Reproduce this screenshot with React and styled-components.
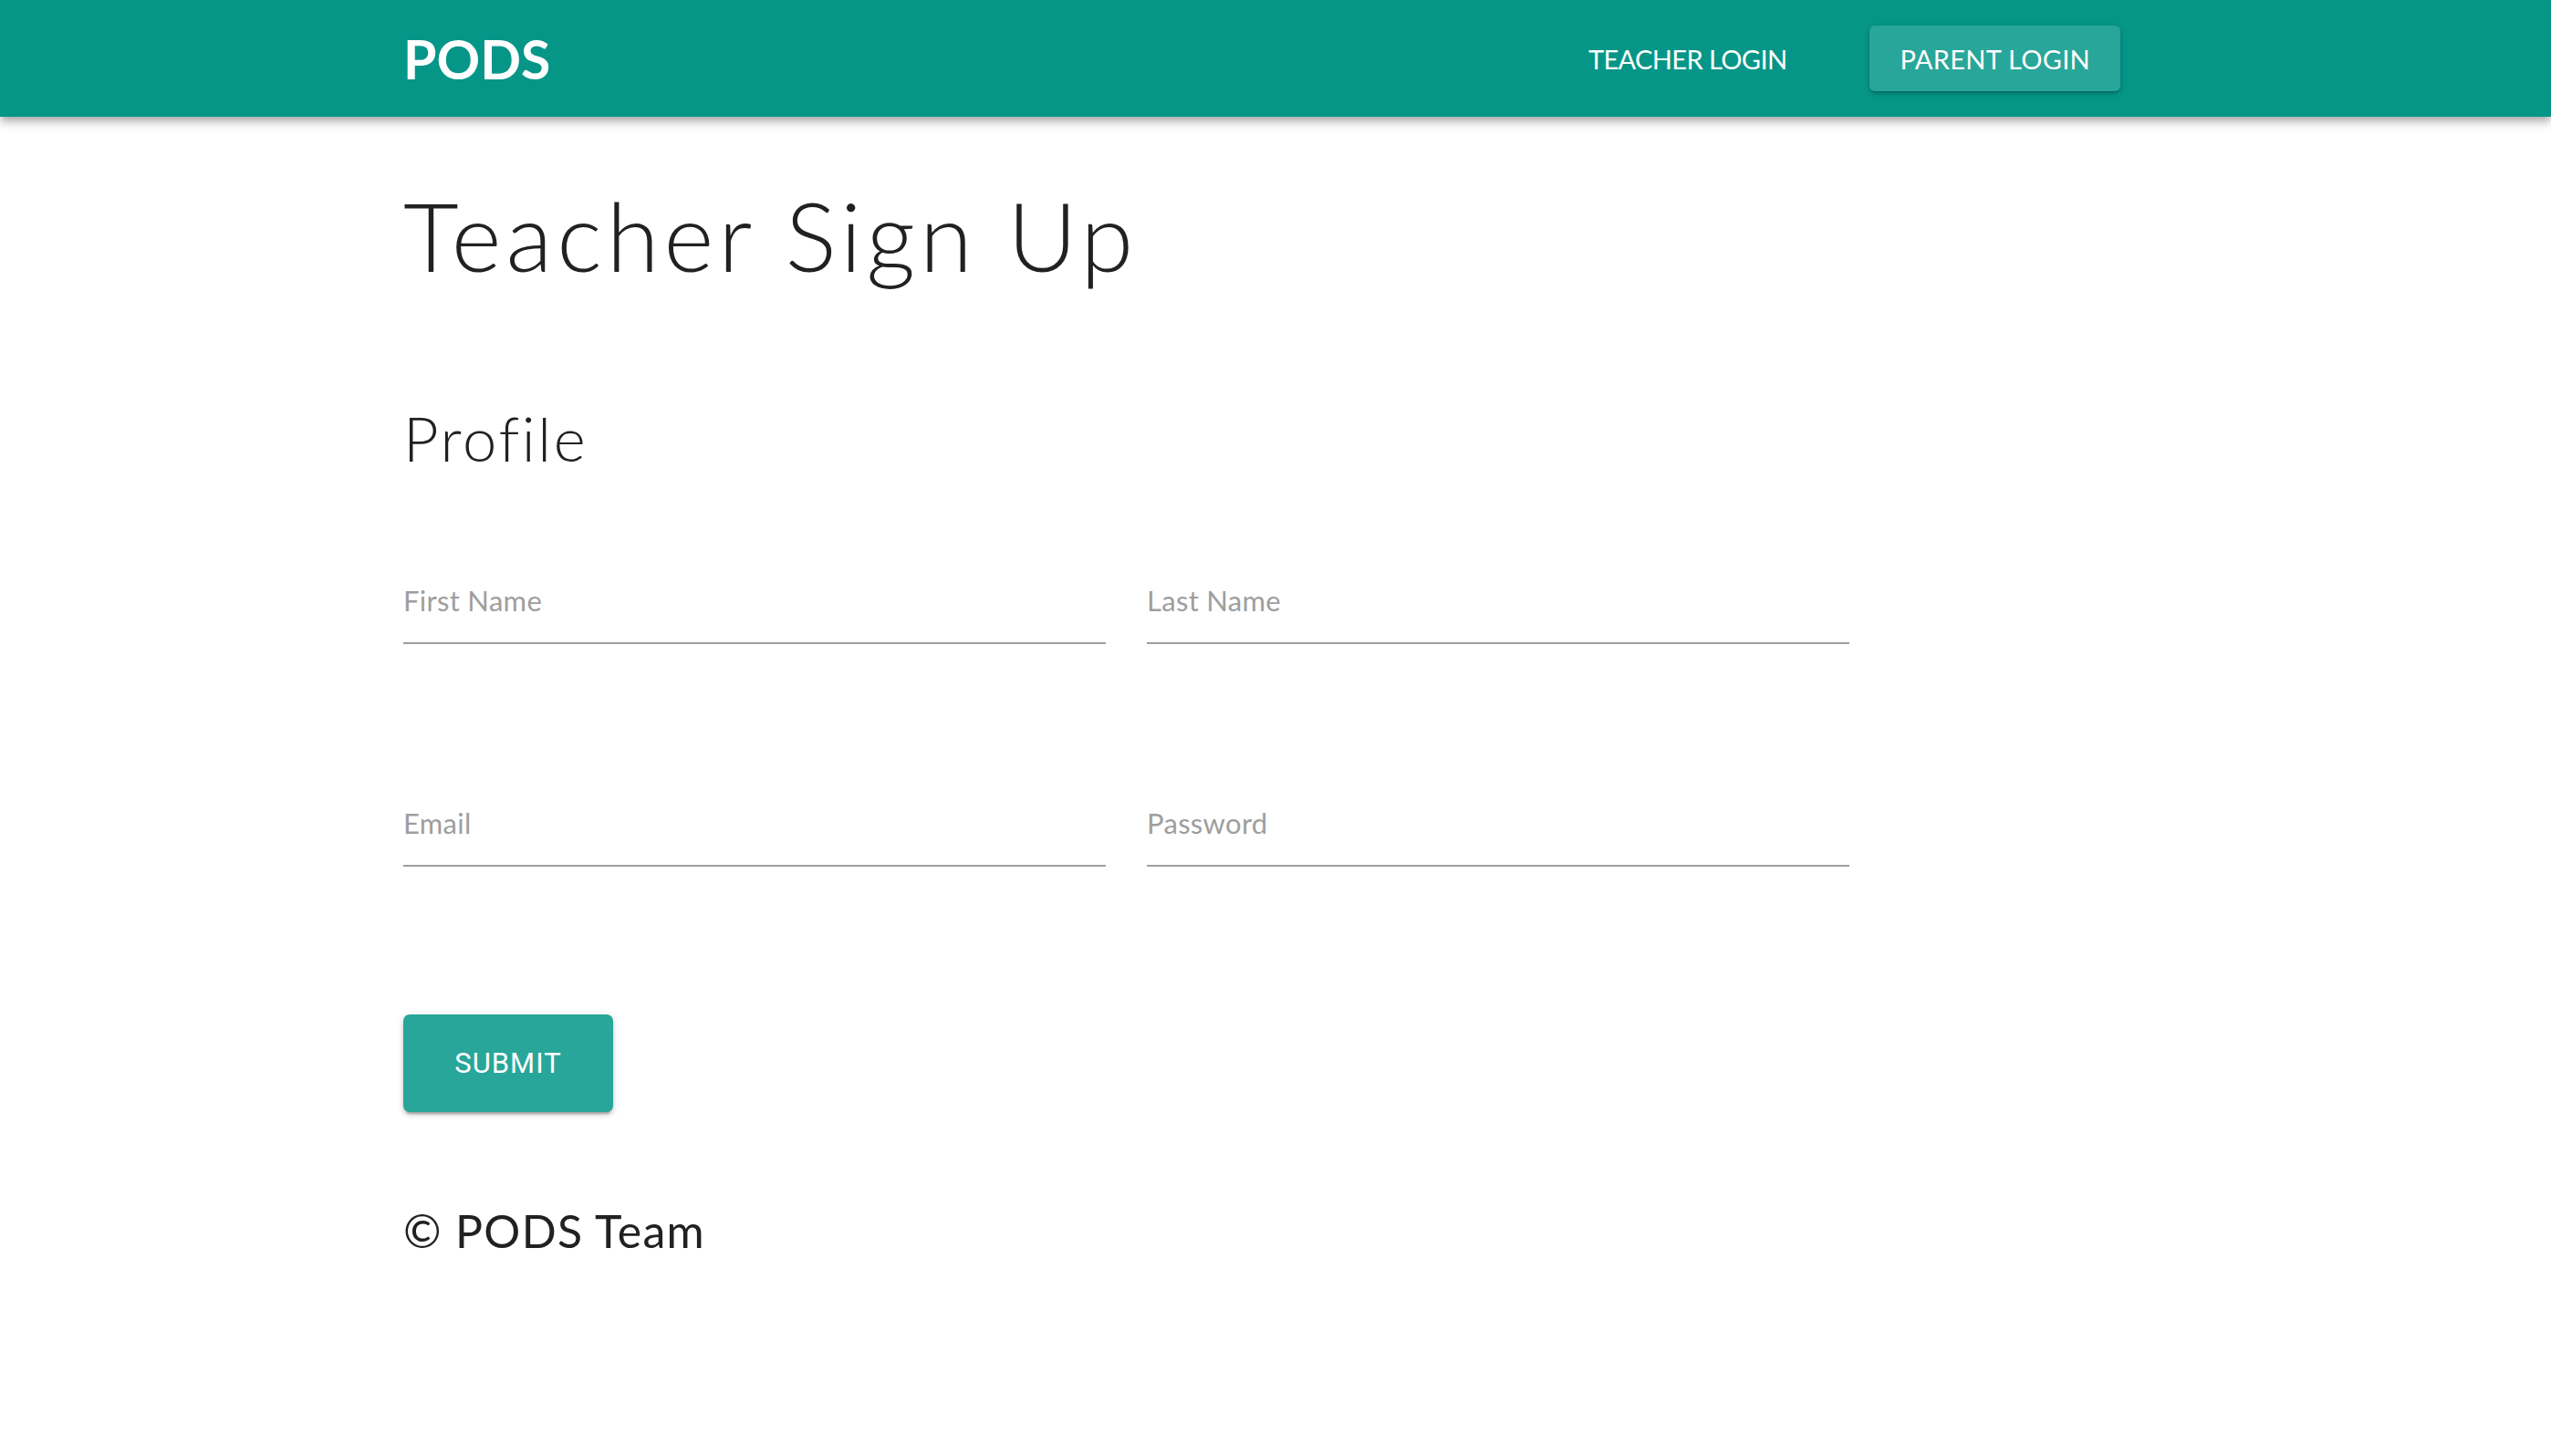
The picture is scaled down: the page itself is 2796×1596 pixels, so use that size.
import React from 'react';
import styled, { createGlobalStyle } from 'styled-components';

const GlobalStyle = createGlobalStyle`
  html, body {
    margin: 0;
    padding: 0;
    background: #ffffff;
  }
  body {
    font-family: 'Lato', 'Open Sans', sans-serif;
    color: #212121;
  }
  * {
    box-sizing: border-box;
  }
`;

const Page = styled.div`
  min-height: 1596px;
  background: #ffffff;
`;

const AppBar = styled.header`
  height: 128px;
  background: #069688;
  box-shadow: 0 4px 7px -2px rgba(0, 0, 0, 0.2), 0 7px 9px 0 rgba(0, 0, 0, 0.14), 0 2px 18px 0 rgba(0, 0, 0, 0.12);
  display: flex;
  align-items: center;
  padding: 0 472px 0 442px;
  position: relative;
  z-index: 1;
`;

const Logo = styled.div`
  font-family: 'Lato', sans-serif;
  font-weight: 700;
  font-size: 59px;
  line-height: 1;
  color: #ffffff;
  flex: 1;
`;

const NavButton = styled.button`
  font-family: 'Lato', sans-serif;
  font-weight: 400;
  font-size: 29px;
  line-height: 1;
  color: #ffffff;
  text-transform: uppercase;
  letter-spacing: ${(p) => (p.$filled ? '0.3px' : '-0.6px')};
  height: 72px;
  padding: 0 33px;
  border: none;
  border-radius: 6px;
  cursor: pointer;
  background: ${(p) => (p.$filled ? '#28a69a' : 'transparent')};
  box-shadow: ${(p) =>
    p.$filled
      ? '0 3px 2px -2px rgba(0,0,0,0.2), 0 2px 4px 0 rgba(0,0,0,0.14), 0 2px 9px 0 rgba(0,0,0,0.12)'
      : 'none'};
  margin-left: ${(p) => (p.$filled ? '58px' : '0')};
`;

const Main = styled.main`
  padding: 77px 0 0 442px;
`;

const Title = styled.h1`
  margin: 0;
  font-family: 'Lato', sans-serif;
  font-weight: 300;
  font-size: 105px;
  line-height: 1;
  letter-spacing: 5px;
  color: #212121;
`;

const SectionTitle = styled.h2`
  margin: 137px 0 0;
  font-family: 'Lato', sans-serif;
  font-weight: 300;
  font-size: 67px;
  line-height: 1;
  letter-spacing: 2.6px;
  color: #212121;
`;

const FormGrid = styled.form`
  margin-top: 129px;
  display: grid;
  grid-template-columns: 770px 770px;
  column-gap: 45px;
  row-gap: 181px;
`;

const Field = styled.label`
  display: block;
  padding-bottom: 30px;
  border-bottom: 2px solid #9e9e9e;
  font-family: 'Lato', sans-serif;
  font-weight: 400;
  font-size: 31px;
  line-height: 1;
  letter-spacing: 0.3px;
  color: #9e9e9e;
`;

const SubmitButton = styled.button`
  margin-top: 162px;
  width: 230px;
  height: 107px;
  border: none;
  border-radius: 7px;
  background: #28a69a;
  color: #ffffff;
  font-family: 'Roboto', sans-serif;
  font-weight: 400;
  font-size: 31px;
  letter-spacing: 1px;
  text-transform: uppercase;
  cursor: pointer;
  box-shadow: 0 5px 2px -3px rgba(0, 0, 0, 0.2), 0 3px 4px 0 rgba(0, 0, 0, 0.14), 0 2px 9px 0 rgba(0, 0, 0, 0.12);
`;

const Footer = styled.footer`
  margin-top: 105px;
  font-family: 'Lato', sans-serif;
  font-weight: 400;
  font-size: 50px;
  line-height: 1;
  letter-spacing: 1.3px;
  color: #212121;
`;

const fields = ['First Name', 'Last Name', 'Email', 'Password'];

function App() {
  return (
    <Page>
      <GlobalStyle />
      <AppBar>
        <Logo>PODS</Logo>
        <NavButton>Teacher Login</NavButton>
        <NavButton $filled>Parent Login</NavButton>
      </AppBar>

      <Main>
        <Title>Teacher Sign Up</Title>
        <SectionTitle>Profile</SectionTitle>

        <FormGrid onSubmit={(e) => e.preventDefault()}>
          {fields.map((f) => (
            <Field key={f}>{f}</Field>
          ))}
        </FormGrid>

        <SubmitButton type="button">Submit</SubmitButton>

        <Footer>© PODS Team</Footer>
      </Main>
    </Page>
  );
}

export default App;
